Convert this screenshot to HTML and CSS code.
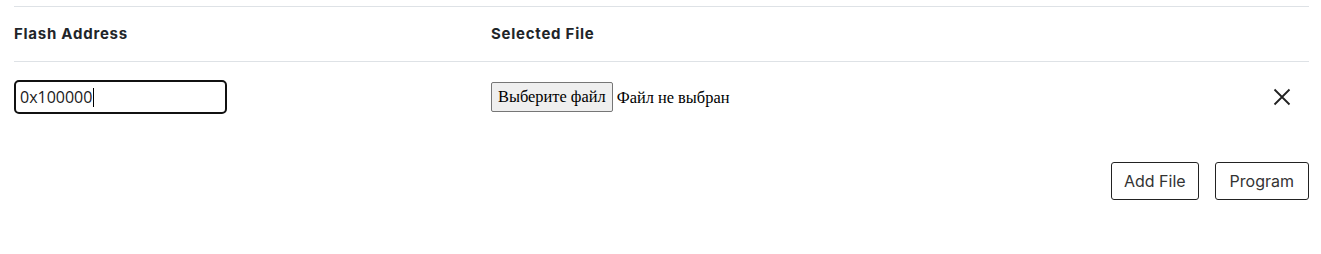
FILE: index.html
```html
<!DOCTYPE html>
<html lang="ru">
<head>
<meta charset="utf-8">
<link rel="stylesheet" href="styles.css">
</head>
<body>
<div class="page">
  <div class="table">
    <div class="row head">
      <div class="col addr">Flash Address</div>
      <div class="col file">Selected File</div>
      <div class="col act"></div>
    </div>
    <div class="row body">
      <div class="col addr"><div class="input">0x100000<span class="caret"></span></div></div>
      <div class="col file"><span class="filebtn">Выберите файл</span><span class="filetxt">Файл не выбран</span></div>
      <div class="col act">
        <svg class="close" width="18" height="18" viewBox="0 0 18 18"><path d="M1.5 1.5 L16.5 16.5 M16.5 1.5 L1.5 16.5" stroke="#222" stroke-width="1.8" fill="none"/></svg>
      </div>
    </div>
  </div>
  <div class="actions">
    <button class="btn">Add File</button>
    <button class="btn btn-wide">Program</button>
  </div>
</div>
</body>
</html>
```
FILE: styles.css
```css
html, body { margin: 0; padding: 0; background: #fff; }
.page { padding: 6px 12px 0 14px; font-family: "Inter", "Open Sans", sans-serif; color: #212529; }
.table { border-top: 1px solid #dee2e6; }
.row { display: flex; align-items: center; border-bottom: 1px solid #dee2e6; }
.row.body { border-bottom: none; height: 70px; }
.row.head { height: 53px; padding-bottom: 1px; }
.col.addr { width: 477px; }
.col.file { flex: 1; display: flex; align-items: center; }
.col.act { width: 36px; display: flex; justify-content: flex-start; }
.head .col { font-weight: 700; font-size: 15px; letter-spacing: 0.75px; color: #212529; }
.input { width: 205px; height: 30px; border: 2px solid #111; border-radius: 5px; font-family: "Open Sans", sans-serif; font-size: 16px; line-height: 30px; padding-left: 4px; color: #1a1a1a; display: flex; align-items: center; }
.caret { display: inline-block; width: 1px; height: 19px; background: #000; margin-left: 1px; }
.filebtn { font-family: "Liberation Serif", serif; font-size: 16.4px; color: #000; background: #efefef; border: 1px solid #767676; border-radius: 2px; padding: 0 6px; height: 28px; line-height: 28px; box-sizing: content-box; }
.filetxt { font-family: "Liberation Serif", serif; font-size: 16.4px; color: #000; margin-left: 4px; margin-top: 1px; }
.close { display: block; }
.actions { display: flex; justify-content: flex-end; gap: 16px; margin-top: 30px; }
.btn { font-family: "Inter", sans-serif; font-size: 16px; color: #333; background: #fff; border: 1px solid #222; border-radius: 3px; height: 38px; padding: 0 12px; }
.btn-wide { padding: 0 14px; }
```
